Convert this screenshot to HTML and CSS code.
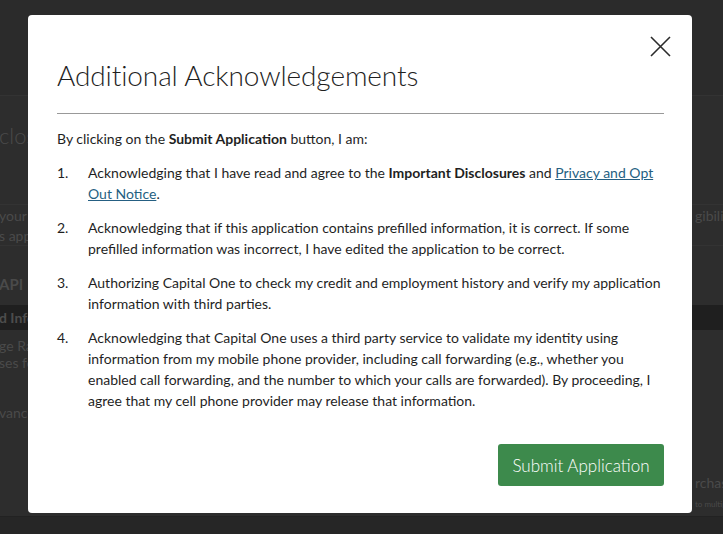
FILE: index.html
```html
<!DOCTYPE html>
<html lang="en">
<head>
<meta charset="utf-8">
<title>Additional Acknowledgements</title>
<link rel="stylesheet" href="styles.css">
</head>
<body>
<div class="page">
  <div class="row top"></div>
  <div class="row heading"><span class="l big">closures</span></div>
  <div class="row gap1"></div>
  <div class="row para"><span class="l">your information</span><span class="r">gibility</span></div>
  <div class="row para2"><span class="l">s application</span></div>
  <div class="row api"><span class="l bold">API</span></div>
  <div class="row band"><span class="l bold">d Info</span></div>
  <div class="row sub"><span class="l">ge Rate</span></div>
  <div class="row sub2"><span class="l">ses for</span></div>
  <div class="row adv"><span class="l">vanced</span></div>
  <div class="row spacer"></div>
  <div class="row purch"><span class="r">rchases</span></div>
  <div class="row tiny"><span class="r small">to multiple</span></div>
  <div class="row foot"></div>
</div>

<div class="overlay">
  <div class="modal" role="dialog" aria-labelledby="t">
    <button class="close" aria-label="Close">
      <svg width="21" height="21" viewBox="0 0 21 21"><path d="M1 1 L20 20 M20 1 L1 20" stroke="#2b2b2b" stroke-width="1.6" fill="none"/></svg>
    </button>
    <h1 id="t" class="title">Additional Acknowledgements</h1>
    <hr class="rule">
    <p class="intro">By clicking on the <b>Submit Application</b> button, I am:</p>
    <ol class="list">
      <li><span class="num">1.</span><span class="txt">Acknowledging that I have read and agree to the <b>Important Disclosures</b> and <a href="#">Privacy and Opt Out Notice</a>.</span></li>
      <li><span class="num">2.</span><span class="txt">Acknowledging that if this application contains prefilled information, it is correct. If some prefilled information was incorrect, I have edited the application to be correct.</span></li>
      <li><span class="num">3.</span><span class="txt">Authorizing Capital One to check my credit and employment history and verify my application information with third parties.</span></li>
      <li><span class="num">4.</span><span class="txt">Acknowledging that Capital One uses a third party service to validate my identity using information from my mobile phone provider, including call forwarding (e.g., whether you enabled call forwarding, and the number to which your calls are forwarded). By proceeding, I agree that my cell phone provider may release that information.</span></li>
    </ol>
    <div class="actions"><button class="submit">Submit Application</button></div>
  </div>
</div>
</body>
</html>
```
FILE: styles.css
```css
* { box-sizing: border-box; }
html, body { margin: 0; height: 100%; }
body {
  background: #2d2d2d;
  font-family: Lato, "Open Sans", sans-serif;
  overflow: hidden;
}
.page { width: 723px; height: 534px; display: flex; flex-direction: column; color: #4a4a4a; }
.row {
  display: grid; grid-template-columns: 695px 28px; align-items: center;
  overflow: hidden; white-space: nowrap; font-size: 14px; flex: none;
}
.row .l { grid-column: 1; margin-left: -1px; overflow: hidden; }
.row .r { grid-column: 2; overflow: hidden; }
.top { height: 96px; border-bottom: 1px solid #333; background: #2b2b2b; }
.heading { height: 79px; }
.big { font-size: 22px; font-weight: 300; }
.gap1 { height: 30px; border-bottom: 1px solid #333; }
.para { height: 20px; }
.para2 { height: 21px; border-bottom: 1px solid #333; }
.api { height: 59px; padding-top: 16px; font-size: 15px; }
.bold { font-weight: 700; }
.band { height: 25px; background: #1f1f1f; color: #4d4d4d; }
.sub { height: 24px; padding-top: 6px; }
.sub2 { height: 16px; }
.adv { height: 84px; }
.spacer { height: 18px; }
.purch { height: 20px; }
.tiny { height: 24px; }
.small { font-size: 8px; }
.foot { flex: 1; background: #262626; border-top: 1px solid #222; }

.overlay { position: fixed; inset: 0; }
.modal {
  position: absolute; left: 28px; top: 15px; width: 664px; height: 498px;
  background: #fff; border-radius: 4px;
  padding: 43px 28px 0 29px;
  color: #1f1f1f;
  display: flex; flex-direction: column;
}
.close {
  position: absolute; top: 21px; right: 21px;
  border: 0; background: none; padding: 0; width: 21px; height: 21px; cursor: pointer;
}
.close svg { display: block; }
.title { margin: 0; font-size: 28px; font-weight: 300; line-height: 34px; color: #1f1f1f; letter-spacing: -0.1px; }
.rule { border: 0; border-top: 1px solid #999; margin: 21px 0 0; }
.intro { margin: 14px 0 0; font-size: 14px; line-height: 21px; }
.intro b, .list b { font-weight: 700; }
.list { list-style: none; margin: 13px 0 0; padding: 0; font-size: 14px; line-height: 21.2px; }
.list li { display: flex; margin-bottom: 12.5px; }
.num { width: 31px; flex: none; }
.txt { flex: 1; }
.list a { color: #255f82; text-decoration: underline; }
.actions { display: flex; justify-content: flex-end; margin-top: 20px; }
.submit {
  background: #3d8a4c; color: #fff; border: 0; border-radius: 3px;
  width: 166px; height: 42px; font-family: inherit; font-size: 17px; font-weight: 300;
}
```
